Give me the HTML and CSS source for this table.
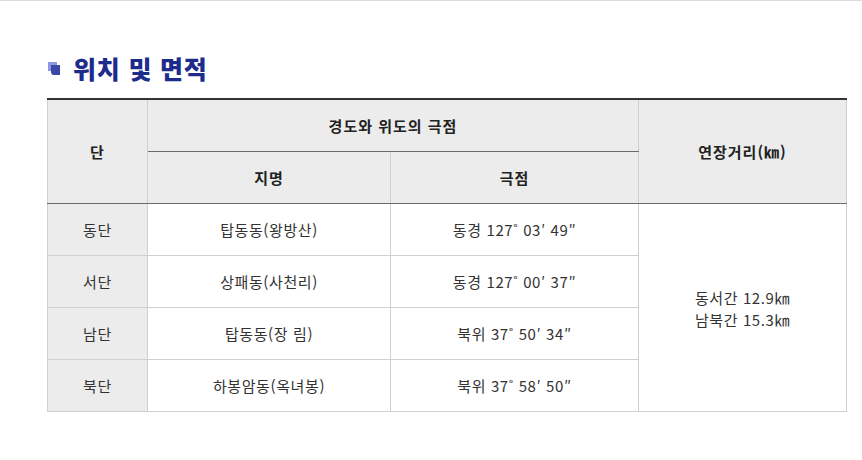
FILE: index.html
```html
<!DOCTYPE html>
<html lang="ko">
<head>
<meta charset="utf-8">
<link rel="stylesheet" href="styles.css">
</head>
<body>
<div class="topline"></div>
<div class="content">
  <h2 class="title">
    <svg class="bullet" width="13" height="14" viewBox="0 0 13 14">
      <rect x="0" y="0" width="9" height="9" fill="#8a98e4"/>
      <path d="M3 3 H12 V13 H6 Q3 13 3 10 Z" fill="#3b48a8"/>
    </svg>
    <span>위치 및 면적</span>
  </h2>
  <table class="geo">
    <colgroup>
      <col class="c1"><col class="c2"><col class="c3"><col class="c4">
    </colgroup>
    <thead>
      <tr>
        <th rowspan="2">단</th>
        <th colspan="2" class="grp">경도와 위도의 극점</th>
        <th rowspan="2" class="last">연장거리(㎞)</th>
      </tr>
      <tr>
        <th>지명</th>
        <th>극점</th>
      </tr>
    </thead>
    <tbody>
      <tr>
        <td class="side">동단</td>
        <td>탑동동(왕방산)</td>
        <td>동경 127˚ 03′ 49″</td>
        <td rowspan="4" class="last dist">동서간 12.9㎞<br>남북간 15.3㎞</td>
      </tr>
      <tr>
        <td class="side">서단</td>
        <td>상패동(사천리)</td>
        <td>동경 127˚ 00′ 37″</td>
      </tr>
      <tr>
        <td class="side">남단</td>
        <td>탑동동(장 림)</td>
        <td>북위 37˚ 50′ 34″</td>
      </tr>
      <tr>
        <td class="side">북단</td>
        <td>하봉암동(옥녀봉)</td>
        <td>북위 37˚ 58′ 50″</td>
      </tr>
    </tbody>
  </table>
</div>
</body>
</html>
```
FILE: styles.css
```css
html, body {
  margin: 0;
  padding: 0;
  background: #fff;
}
body {
  font-family: "Noto Sans CJK KR", "Noto Sans", sans-serif;
  color: #333;
}
.topline {
  height: 1px;
  background: #dcdcdc;
}
.content {
  padding: 0 16px 0 47px;
}
.title {
  display: flex;
  align-items: center;
  gap: 12px;
  margin: 51px 0 14px 1px;
  height: 32px;
  font-size: 25px;
  font-weight: 900;
  color: #1d2b8c;
  line-height: 32px;
  letter-spacing: 0.8px;
}
.bullet {
  display: block;
  margin-top: 2px;
}
.geo {
  width: 799px;
  border-collapse: collapse;
  table-layout: fixed;
  border-top: 2px solid #333;
  font-size: 15px;
  letter-spacing: 0.6px;
}
.c1 { width: 100px; }
.c2 { width: 243px; }
.c3 { width: 248px; }
.c4 { width: 208px; }
.geo th, .geo td {
  border: 1px solid #cfcfcf;
  text-align: center;
  vertical-align: middle;
  height: 51px;
  padding: 0;
  line-height: 22px;
}
.geo th {
  background: #ececec;
  color: #222;
  font-weight: 700;
  letter-spacing: 1px;
}
.geo th.grp {
  border-bottom: 1px solid #6b6b6b;
}
.geo thead tr:last-child th,
.geo thead th[rowspan] {
  border-bottom: 1px solid #6b6b6b;
}
.geo td {
  background: #fff;
  color: #333;
}
.geo td.side {
  background: #ececec;
}
.geo td.dist {
  padding-top: 2px;
}
```
